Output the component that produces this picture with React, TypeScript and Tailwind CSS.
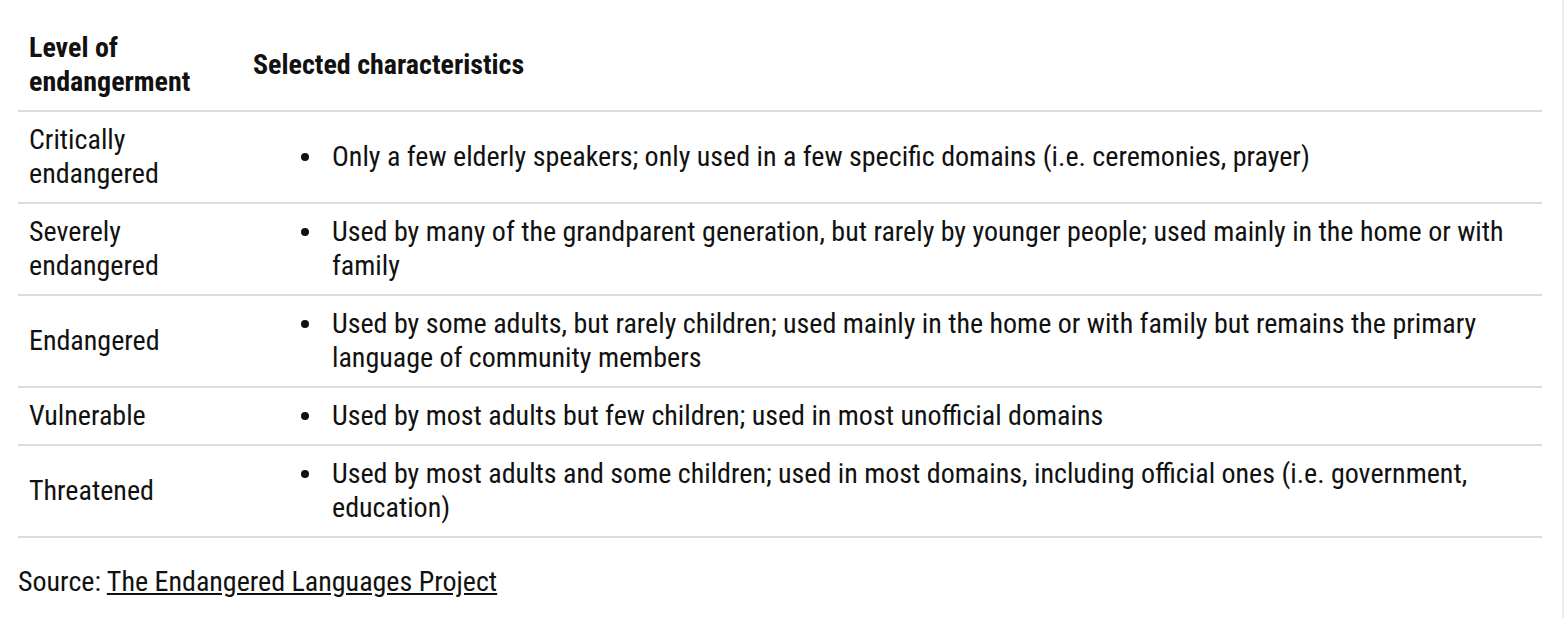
import React from "react";

const rows: { level: string; text: string }[] = [
  { level: "Critically endangered", text: "Only a few elderly speakers; only used in a few specific domains (i.e. ceremonies, prayer)" },
  { level: "Severely endangered", text: "Used by many of the grandparent generation, but rarely by younger people; used mainly in the home or with family" },
  { level: "Endangered", text: "Used by some adults, but rarely children; used mainly in the home or with family but remains the primary language of community members" },
  { level: "Vulnerable", text: "Used by most adults but few children; used in most unofficial domains" },
  { level: "Threatened", text: "Used by most adults and some children; used in most domains, including official ones (i.e. government, education)" },
];

export default function App() {
  return (
    <div className="min-h-[618px] w-full bg-white flex">
      <div
        className="flex-1 pt-[20px] pl-[18px] pr-[20px] text-[28px] leading-[34px] text-[#111] font-stretch-condensed"
        style={{ fontFamily: "Roboto, 'Noto Sans', sans-serif" }}
      >
        <table className="w-full border-collapse table-fixed">
          <thead>
            <tr className="border-b-2 border-[#dddddd]">
              <th className="w-[224px] px-[11px] py-[11px] text-left align-middle font-bold">Level of endangerment</th>
              <th className="px-[11px] py-[11px] text-left align-middle font-bold">Selected characteristics</th>
            </tr>
          </thead>
          <tbody>
            {rows.map((r) => (
              <tr key={r.level} className="border-b-2 border-[#dddddd]">
                <td className="px-[11px] py-[11px] align-middle">{r.level}</td>
                <td className="px-[11px] py-[11px] align-middle">
                  <ul className="list-none pl-[48px]">
                    <li className="flex items-start">
                      <span className="flex h-[34px] w-[31px] shrink-0 items-center">
                        <span className="block h-[8px] w-[8px] rounded-full bg-[#111]" />
                      </span>
                      <span>{r.text}</span>
                    </li>
                  </ul>
                </td>
              </tr>
            ))}
          </tbody>
        </table>
        <p className="mt-[27px]">
          Source: <a className="underline">The Endangered Languages Project</a>
        </p>
      </div>
      <div className="w-[2px] bg-[#eeeeee]" />
    </div>
  );
}
